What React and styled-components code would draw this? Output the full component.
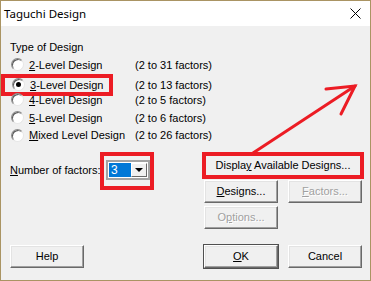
import styled, { createGlobalStyle } from "styled-components";

const GlobalStyle = createGlobalStyle`
  html, body {
    margin: 0;
    padding: 0;
    background: #ffffff;
  }
  body {
    font-family: "Liberation Sans", Arial, sans-serif;
  }
`

const Window = styled.div`
  position: relative;
  width: 371px;
  height: 281px;
  box-sizing: border-box;
  border: 1px solid #aa9463;
  background: #f0f0f0;
  display: flex;
  flex-direction: column;
  font: 11px "Liberation Sans", Arial, sans-serif;
  color: #000;
`

const TitleBar = styled.div`
  height: 25px;
  flex: 0 0 25px;
  background: #ffffff;
  display: flex;
  align-items: center;
  justify-content: space-between;
  padding: 0 9px 0 3px;
`

const Title = styled.span`
  font: 11.5px "Noto Sans", "Open Sans", sans-serif;
  color: #000;
`

const Body = styled.div`
  padding: 12px 8px 0 9px;
  display: flex;
  flex-direction: column;
`

const GroupLabel = styled.div`
  height: 18px;
  line-height: 18px;
`

const RadioList = styled.div`
  display: grid;
  grid-auto-rows: 17.6px;
`

const Row = styled.div`
  display: grid;
  grid-template-columns: 125px auto;
  align-items: center;
`

const ChoiceCell = styled.div`
  display: flex;
  align-items: center;
  height: 100%;
`

const Choice = styled.label`
  display: flex;
  align-items: center;
  gap: 5px;
  height: 14px;
  white-space: nowrap;
  ${({ $highlight }) => $highlight && `
    width: 98px;
    margin-left: -9px;
    padding-left: 6px;
    border: 4px solid #ec1c24;
    box-sizing: content-box;
  `}
`

const Radio = styled.span`
  position: relative;
  width: 11px;
  height: 11px;
  margin-left: 1px;
  border-radius: 50%;
  background: #ffffff;
  border: 1px solid;
  border-color: #8a8a8a #e6e6e6 #e6e6e6 #8a8a8a;
  box-shadow: inset 1px 1px 0 #5a5a5a;
  flex: 0 0 auto;
  &::after {
    content: "";
    display: ${({ $checked }) => ($checked ? "block" : "none")};
    position: absolute;
    left: 3px;
    top: 3px;
    width: 5px;
    height: 5px;
    border-radius: 50%;
    background: #000;
  }
`

const Middle = styled.div`
  display: flex;
  justify-content: space-between;
  margin-top: 10px;
`

const FactorRow = styled.div`
  display: flex;
  align-items: center;
  padding-top: 6px;
  height: 20px;
`

const FieldLabel = styled.span`
  width: 96px;
  white-space: nowrap;
`

const Highlight = styled.span`
  display: inline-flex;
  border: 4px solid #ec1c24;
  padding: 4px 0 6px 2px;
  margin: -8px -4px -10px -6px;
`

const Combo = styled.span`
  display: flex;
  align-items: stretch;
  width: 44px;
  height: 20px;
  box-sizing: border-box;
  border: 2px solid #a3a3a3;
  background: #ffffff;
  padding: 1px;
`

const ComboValue = styled.span`
  flex: 1;
  background: #0078d7;
  color: #ffffff;
  padding-left: 2px;
  line-height: 14px;
  font-size: 12px;
`

const ComboButton = styled.span`
  width: 16px;
  display: flex;
  align-items: center;
  justify-content: center;
  background: #f0f0f0;
  box-sizing: border-box;
  border: 1px solid;
  border-color: #ffffff #696969 #696969 #ffffff;
  &::after {
    content: "";
    border-left: 4px solid transparent;
    border-right: 4px solid transparent;
    border-top: 4px solid #000;
  }
`

const ButtonGrid = styled.div`
  display: grid;
  grid-template-columns: 74px 74px;
  grid-auto-rows: 23px;
  column-gap: 10px;
  row-gap: 3px;
`

const Button = styled.button`
  box-sizing: border-box;
  width: ${({ $wide }) => ($wide ? "auto" : "74px")};
  height: 23px;
  padding: 0;
  margin: 0;
  font: 11px "Liberation Sans", Arial, sans-serif;
  color: ${({ disabled }) => (disabled ? "#a0a0a0" : "#000")};
  text-shadow: ${({ disabled }) => (disabled ? "1px 1px 0 #ffffff" : "none")};
  background: #f0f0f0;
  border: 1px solid;
  border-color: #ffffff #696969 #696969 #ffffff;
  box-shadow: inset -1px -1px 0 #a0a0a0, inset 1px 1px 0 #e3e3e3
    ${({ $default }) => ($default ? ", 0 0 0 1px #505050" : "")};
  grid-column: ${({ $wide }) => ($wide ? "1 / span 2" : "auto")};
  outline: ${({ $highlight }) => ($highlight ? "4px solid #ec1c24" : "none")};
  outline-offset: -2px;
  white-space: nowrap;
`

const Footer = styled.div`
  display: flex;
  justify-content: space-between;
  margin-top: 16px;
`

const ButtonPair = styled.div`
  display: flex;
  gap: 10px;
`

const Arrow = styled.svg`
  position: absolute;
  left: -1px;
  top: -1px;
  pointer-events: none;
`

const choices = [
  { key: "2", rest: "-Level Design", range: "(2 to 31 factors)" },
  { key: "3", rest: "-Level Design", range: "(2 to 13 factors)", checked: true },
  { key: "4", rest: "-Level Design", range: "(2 to 5 factors)" },
  { key: "5", rest: "-Level Design", range: "(2 to 6 factors)" },
  { key: "M", rest: "ixed Level Design", range: "(2 to 26 factors)" },
]

const App = () => {
  return (
    <>
      <GlobalStyle />
      <Window>
        <TitleBar>
          <Title>Taguchi Design</Title>
          <svg width="11" height="11" viewBox="0 0 11 11">
            <path d="M0.5 0.5 L10.5 10.5 M10.5 0.5 L0.5 10.5" stroke="#000" strokeWidth="1" />
          </svg>
        </TitleBar>
        <Body>
          <GroupLabel>Type of Design</GroupLabel>
          <RadioList>
            {choices.map((c) => (
              <Row key={c.key}>
                <ChoiceCell>
                  <Choice $highlight={c.checked}>
                    <Radio $checked={c.checked} />
                    <span><u>{c.key}</u>{c.rest}</span>
                  </Choice>
                </ChoiceCell>
                <span>{c.range}</span>
              </Row>
            ))}
          </RadioList>
          <Middle>
            <FactorRow>
              <FieldLabel><u>N</u>umber of factors:</FieldLabel>
              <Highlight>
                <Combo>
                  <ComboValue>3</ComboValue>
                  <ComboButton />
                </Combo>
              </Highlight>
            </FactorRow>
            <ButtonGrid>
              <Button $wide $highlight>Displa<u>y</u> Available Designs...</Button>
              <Button><u>D</u>esigns...</Button>
              <Button disabled><u>F</u>actors...</Button>
              <Button disabled>O<u>p</u>tions...</Button>
            </ButtonGrid>
          </Middle>
          <Footer>
            <Button>Help</Button>
            <ButtonPair>
              <Button $default><u>O</u>K</Button>
              <Button>Cancel</Button>
            </ButtonPair>
          </Footer>
        </Body>
        <Arrow width="371" height="281" viewBox="0 0 371 281">
          <g stroke="#ec1c24" strokeWidth="3" strokeLinecap="round" fill="none">
            <path d="M253 153 L355 86" />
            <path d="M326 89 L355 86 L341 114" />
          </g>
        </Arrow>
      </Window>
    </>
  );
};

export default App;
